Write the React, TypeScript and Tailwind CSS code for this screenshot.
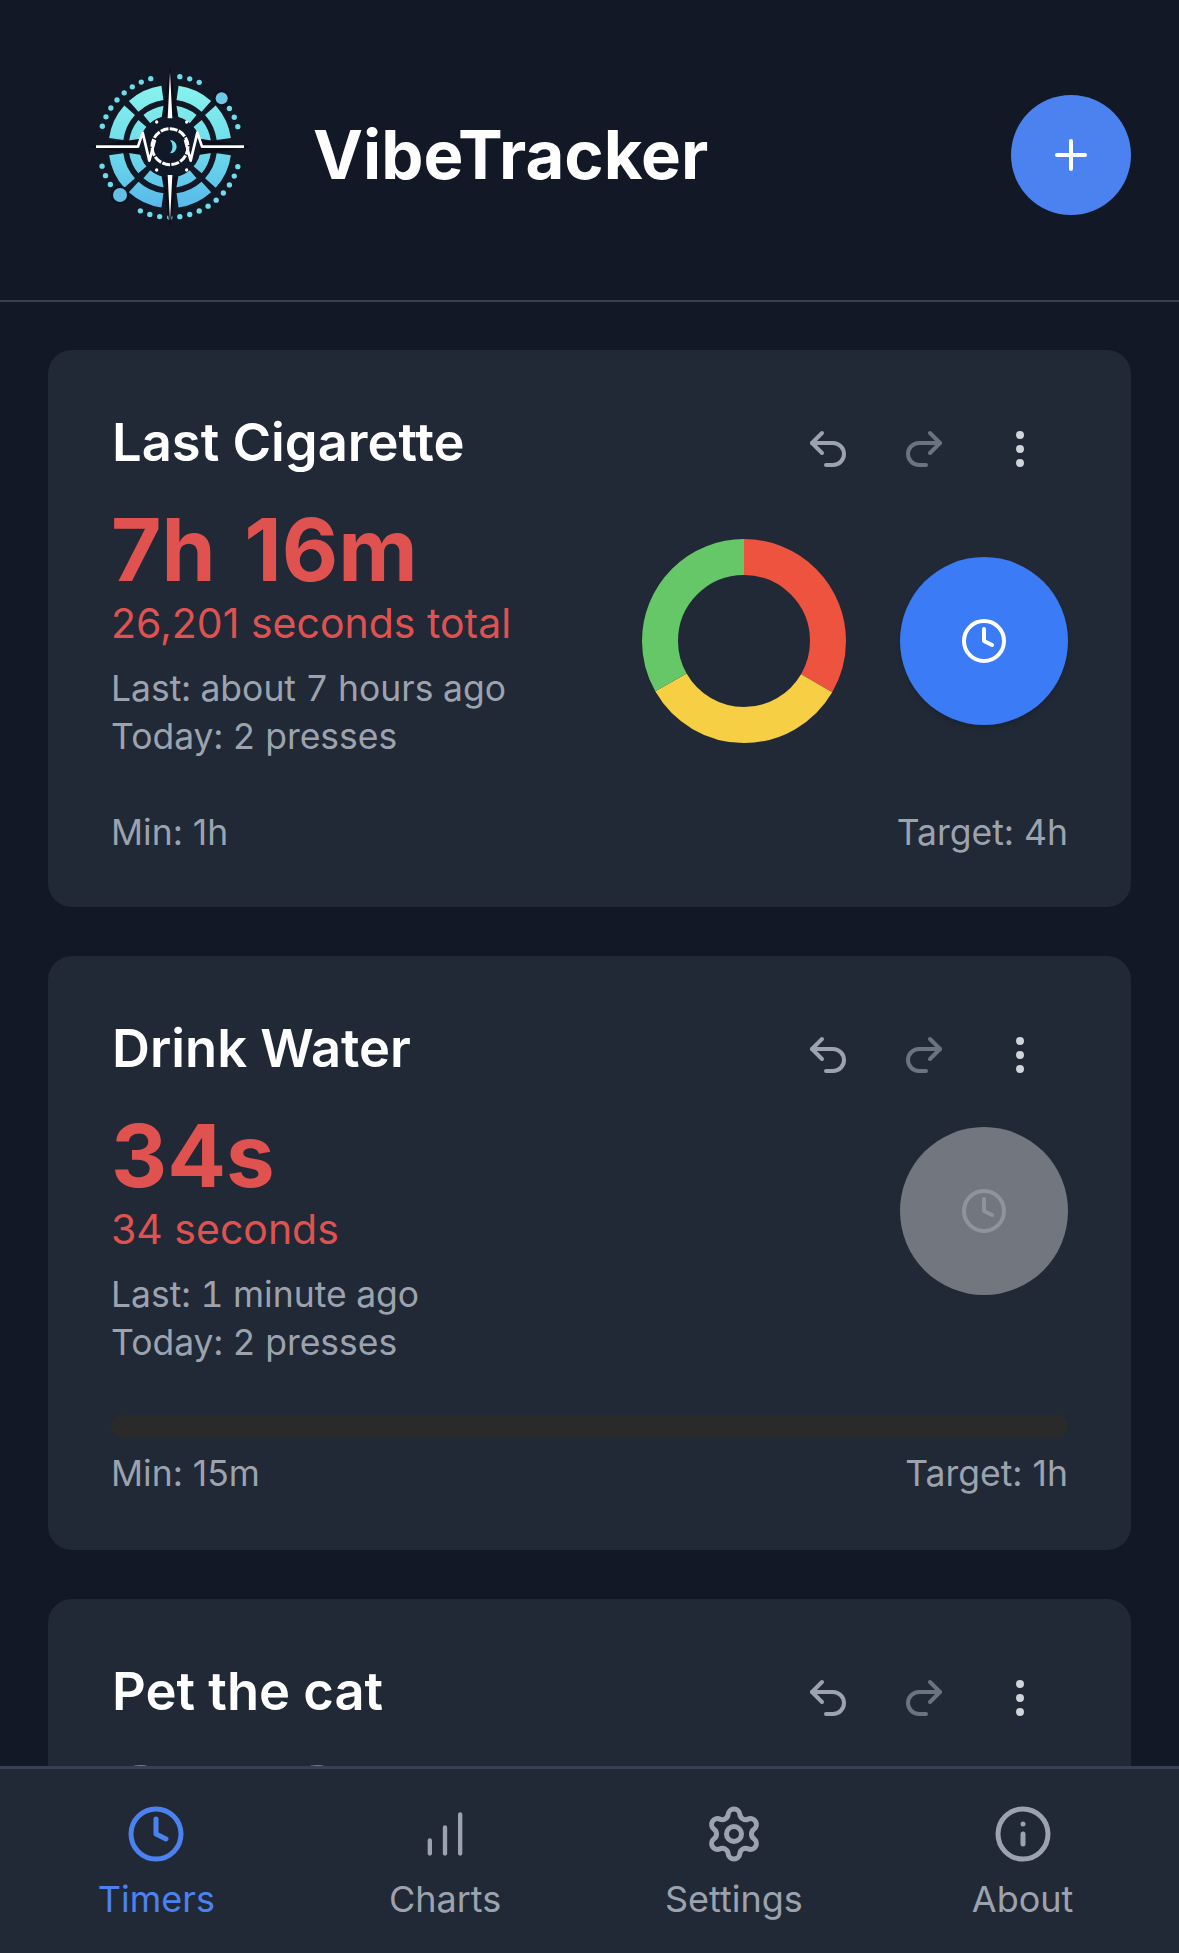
import { ChartNoAxesColumnIncreasing, Clock, EllipsisVertical, Info, Plus, Redo2, Settings, Undo2 } from "lucide-react";

const ringOuter = [[8, 42], [48, 82], [98, 132], [138, 172], [188, 222], [228, 262], [278, 312], [318, 352]];
const ringInner = [[8, 40], [50, 82], [98, 130], [140, 172], [188, 220], [230, 262], [278, 310], [320, 352]];

function polar(r: number, deg: number) {
  const a = ((deg - 90) * Math.PI) / 180;
  return `${(330 + r * Math.cos(a)).toFixed(1)} ${(320 + r * Math.sin(a)).toFixed(1)}`;
}

function arc(r: number, from: number, to: number) {
  return `M${polar(r, from)} A${r} ${r} 0 ${to - from > 180 ? 1 : 0} 1 ${polar(r, to)}`;
}

const dotAngles = Array.from({ length: 44 }, (_, i) => i * 8.2 + 8).filter(
  (a) => !(a > 32 && a < 56) && !(a > 78 && a < 102) && !(a > 208 && a < 234) && !(a > 262 && a < 280) && !(a > 346),
);

function Logo() {
  return (
    <svg viewBox="0 0 660 630" className="w-[220px] h-[210px] shrink-0 -mt-[20px]">
      <defs>
        <linearGradient id="ring" gradientUnits="userSpaceOnUse" x1="330" y1="120" x2="330" y2="520">
          <stop offset="0" stopColor="#8af5ee" />
          <stop offset="0.5" stopColor="#6fdcea" />
          <stop offset="1" stopColor="#56b6ea" />
        </linearGradient>
      </defs>
      {ringOuter.map(([a, b]) => (
        <path key={a} d={arc(163, a, b)} fill="none" stroke="url(#ring)" strokeWidth="43" />
      ))}
      {ringInner.map(([a, b]) => (
        <path key={a} d={arc(108, a, b)} fill="none" stroke="url(#ring)" strokeWidth="32" />
      ))}
      {dotAngles.map((a) => {
        const [x, y] = polar(212, a).split(" ");
        return <circle key={a} cx={x} cy={y} r="8" fill="#6fdcea" />;
      })}
      <circle cx="485" cy="175" r="26" fill="#0d1220" />
      <circle cx="485" cy="175" r="18" fill="#6cc8e6" />
      <circle cx="180" cy="465" r="28" fill="#0d1220" />
      <circle cx="180" cy="465" r="21" fill="#62c0e4" />
      <path d="M330 80 L358 250 L330 280 L302 250Z M330 560 L358 390 L330 360 L302 390Z" fill="#0b0f1a" />
      <path d="M85 320 L240 296 L420 296 L575 320 L420 344 L240 344Z" fill="#0b0f1a" />
      <circle cx="330" cy="320" r="92" fill="#111827" />
      <path d="M330 96 L337 235 L323 235Z M330 544 L337 405 L323 405Z" fill="#ffffff" />
      <circle cx="330" cy="320" r="54" fill="none" stroke="#ffffff" strokeWidth="9" strokeDasharray="24 4" />
      <path d="M108 320 L234 320 L248 278 L268 362 L285 300 M375 300 L392 362 L412 278 L426 320 L552 320" fill="none" stroke="#ffffff" strokeWidth="8" strokeLinejoin="round" />
      <path d="M330 300 A20 20 0 1 1 330 340 A30 30 0 0 0 330 300Z" fill="#6fdcea" />
      <circle cx="290" cy="246" r="5" fill="#ffffff" />
      <circle cx="380" cy="246" r="5" fill="#ffffff" />
      <circle cx="290" cy="390" r="5" fill="#ffffff" />
      <circle cx="380" cy="390" r="5" fill="#ffffff" />
    </svg>
  );
}

function Donut() {
  const c = 2 * Math.PI * 84;
  const segs = [
    { color: "#ee5340", start: 0 },
    { color: "#f7cf45", start: 120 },
    { color: "#66c768", start: 240 },
  ];
  return (
    <svg viewBox="0 0 204 204" className="w-[204px] h-[204px] -rotate-90">
      {segs.map((s) => (
        <circle
          key={s.color}
          cx="102"
          cy="102"
          r="84"
          fill="none"
          stroke={s.color}
          strokeWidth="36"
          strokeDasharray={`${c / 3} ${c}`}
          strokeDashoffset={(-c * s.start) / 360}
        />
      ))}
    </svg>
  );
}

function CardHeader({ title }: { title: string }) {
  return (
    <div className="flex items-start justify-between">
      <h2 className="pt-[1px] pl-[1px] text-[52.5px] leading-[54px] font-semibold text-white">{title}</h2>
      <div className="flex pt-[11px]">
        <div className="w-[96px] flex justify-center">
          <Undo2 size={48} className="text-[#9ca3af]" />
        </div>
        <div className="w-[96px] flex justify-center">
          <Redo2 size={48} className="text-[#6b7280]" />
        </div>
        <div className="w-[96px] flex justify-center">
          <EllipsisVertical size={48} className="text-[#d1d5db]" />
        </div>
      </div>
    </div>
  );
}

function BigTime({ children }: { children: string }) {
  return <div className="text-[87px] leading-[88px] font-bold [word-spacing:8px] text-[#df524f]">{children}</div>;
}

function TimerText({ big, sub, last, today }: { big: string; sub: string; last: string; today: string }) {
  return (
    <div className="pt-[33px]">
      <BigTime>{big}</BigTime>
      <div className="mt-[5px] text-[41px] leading-[48px] text-[#df524f]">{sub}</div>
      <div className="mt-[18px] text-[35.5px] leading-[48px] tabular-nums text-[#9ca3af]">{last}</div>
      <div className="text-[35.5px] leading-[48px] tabular-nums text-[#9ca3af]">{today}</div>
    </div>
  );
}

function TapButton({ disabled }: { disabled?: boolean }) {
  return (
    <div
      className={
        disabled
          ? "w-[168px] h-[168px] rounded-full bg-[#72777f] flex items-center justify-center"
          : "w-[168px] h-[168px] rounded-full bg-[#3b7bf6] shadow-md flex items-center justify-center"
      }
    >
      <Clock size={48} className={disabled ? "text-[#8e939c]" : "text-white"} />
    </div>
  );
}

function Limits({ min, target }: { min: string; target: string }) {
  return (
    <div className="flex justify-between text-[35.5px] leading-[48px] text-[#9ca3af]">
      <span>{min}</span>
      <span>{target}</span>
    </div>
  );
}

const tabs = [
  { label: "Timers", Icon: Clock, size: 60, active: true },
  { label: "Charts", Icon: ChartNoAxesColumnIncreasing, size: 52, active: false },
  { label: "Settings", Icon: Settings, size: 60, active: false },
  { label: "About", Icon: Info, size: 60, active: false },
];

export default function App() {
  return (
    <div className="w-[1179px] h-[1953px] flex flex-col overflow-hidden bg-[#121826] font-['Inter',sans-serif]">
      <header className="h-[302px] shrink-0 flex items-center border-b-2 border-[#374151] pt-[10px] pl-[60px] pr-[48px]">
        <Logo />
        <h1 className="ml-[33px] text-[67px] font-bold text-white">VibeTracker</h1>
        <div className="ml-auto w-[120px] h-[120px] rounded-full bg-[#4c82f0] flex items-center justify-center">
          <Plus size={48} className="text-white" />
        </div>
      </header>

      <main className="flex-1 min-h-0 overflow-hidden px-[48px] pt-[48px] flex flex-col gap-[49px]">
        <section className="shrink-0 h-[557px] rounded-[24px] bg-[#212936] pl-[63px] pr-[63px] pt-[64px]">
          <CardHeader title="Last Cigarette" />
          <div className="flex justify-between">
            <TimerText big="7h 16m" sub="26,201 seconds total" last="Last: about 7 hours ago" today="Today: 2 presses" />
            <div className="mt-[48px] h-[240px] flex items-center gap-[54px]">
              <Donut />
              <TapButton />
            </div>
          </div>
          <div className="mt-[48px]">
            <Limits min="Min: 1h" target="Target: 4h" />
          </div>
        </section>

        <section className="shrink-0 h-[594px] rounded-[24px] bg-[#212936] pl-[63px] pr-[63px] pt-[64px]">
          <CardHeader title="Drink Water" />
          <div className="flex justify-between">
            <TimerText big="34s" sub="34 seconds" last="Last: 1 minute ago" today="Today: 2 presses" />
            <div className="mt-[48px]">
              <TapButton disabled />
            </div>
          </div>
          <div className="mt-[48px] h-[22px] rounded-full bg-[#2a2a2a]" />
          <div className="mt-[13px]">
            <Limits min="Min: 15m" target="Target: 1h" />
          </div>
        </section>

        <section className="shrink-0 h-[560px] rounded-[24px] bg-[#212936] pl-[63px] pr-[63px] pt-[64px]">
          <CardHeader title="Pet the cat" />
          <div className="pt-[32px]">
            <BigTime>6h 16m</BigTime>
          </div>
        </section>
      </main>

      <nav className="h-[187px] shrink-0 grid grid-cols-4 px-[12px] bg-[#212936] border-t-[3px] border-[#374151]">
        {tabs.map(({ label, Icon, size, active }) => (
          <div key={label} className={active ? "flex flex-col items-center text-[#4c82f0]" : "flex flex-col items-center text-[#9ca3af]"}>
            <div className="mt-[35px] h-[60px] flex items-center">
              <Icon size={size} />
            </div>
            <span className="mt-[13px] text-[36px] leading-[44px]">{label}</span>
          </div>
        ))}
      </nav>
    </div>
  );
}
